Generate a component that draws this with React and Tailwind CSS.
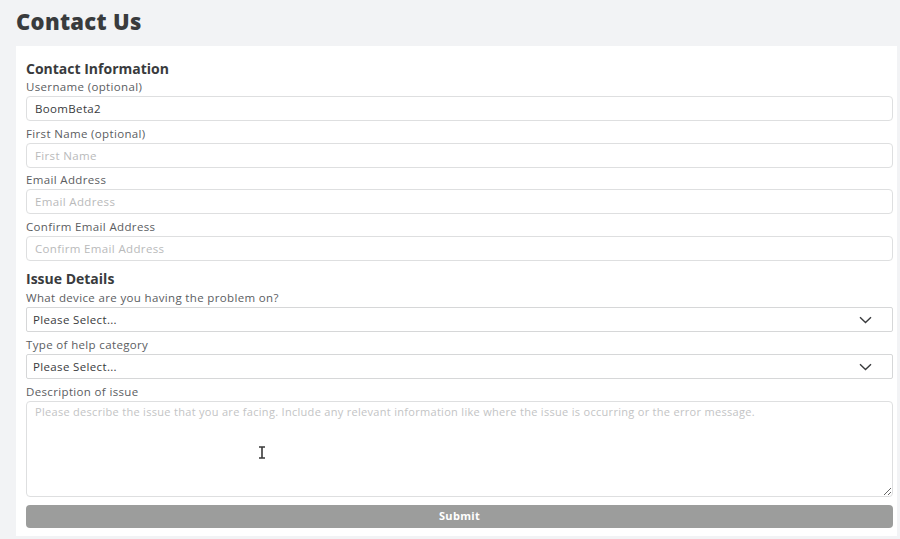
import React from "react";

const font = { fontFamily: '"Open Sans", "Liberation Sans", sans-serif' };

function Label({ children }) {
  return (
    <div className="h-[17px] text-[11.5px] leading-[16px] tracking-[0.35px] text-[#5b5d5f]">{children}</div>
  );
}

function TextInput({ value, placeholder, mb = "mb-[5px]" }) {
  return (
    <div className={`h-[25px] ${mb} rounded-[4px] border border-[#dedfe0] bg-white flex items-center px-2 text-[11.5px] tracking-[0.35px]`}>
      {value ? (
        <span className="text-[#393b3d]">{value}</span>
      ) : (
        <span className="text-[#b9babb]">{placeholder}</span>
      )}
    </div>
  );
}

function Select() {
  return (
    <div className="h-[25px] mb-[5px] rounded-[2px] border border-[#d6d7d8] bg-white flex items-center justify-between pl-[6px] pr-[20px] text-[11.5px] tracking-[0.35px] text-[#393b3d]">
      <span>Please Select...</span>
      <svg width="13" height="8" viewBox="0 0 13 8" fill="none">
        <path d="M1 1.2 L6.5 6.5 L12 1.2" stroke="#393b3d" strokeWidth="1.4" />
      </svg>
    </div>
  );
}

export default function App() {
  return (
    <div className="w-[900px] h-[539px] bg-[#f2f3f5] overflow-hidden" style={font}>
      <h1 className="h-[46px] pl-4 pt-[5px] text-[22px] leading-[32px] font-extrabold text-[#393b3d] tracking-[0.3px]">
        Contact Us
      </h1>
      <div className="ml-4 mr-[3px] h-[490px] bg-white pl-[10px] pr-[4px] pt-[13px]">
        <h2 className="h-[20px] text-[14px] leading-[20px] font-bold text-[#393b3d]">Contact Information</h2>
        <Label>Username (optional)</Label>
        <TextInput value="BoomBeta2" />
        <Label>First Name (optional)</Label>
        <TextInput placeholder="First Name" mb="mb-[4px]" />
        <Label>Email Address</Label>
        <TextInput placeholder="Email Address" />
        <Label>Confirm Email Address</Label>
        <TextInput placeholder="Confirm Email Address" />
        <h2 className="h-[21px] mt-[8px] text-[14px] leading-[20px] font-bold text-[#393b3d]">Issue Details</h2>
        <Label>What device are you having the problem on?</Label>
        <Select />
        <Label>Type of help category</Label>
        <Select />
        <Label>Description of issue</Label>
        <div className="relative">
          <textarea
            className="block w-full h-[96px] rounded-[4px] border border-[#dedfe0] bg-white px-2 py-[2px] text-[11px] leading-[16px] tracking-[0.3px] placeholder:text-[#c3c4c5] outline-none"
            style={font}
            placeholder="Please describe the issue that you are facing. Include any relevant information like where the issue is occurring or the error message."
          />
          <svg className="absolute left-[232px] top-[45px]" width="8" height="13" viewBox="0 0 8 13">
            <path d="M1 1 H7 M4 1 V12 M1 12 H7" stroke="#3a3a3a" strokeWidth="1.6" fill="none" />
          </svg>
        </div>
        <button className="mt-[8px] w-full h-[23px] rounded-[4px] bg-[#9c9d9c] text-white text-[11px] font-bold tracking-[0.3px]" style={font}>
          Submit
        </button>
      </div>
    </div>
  );
}
